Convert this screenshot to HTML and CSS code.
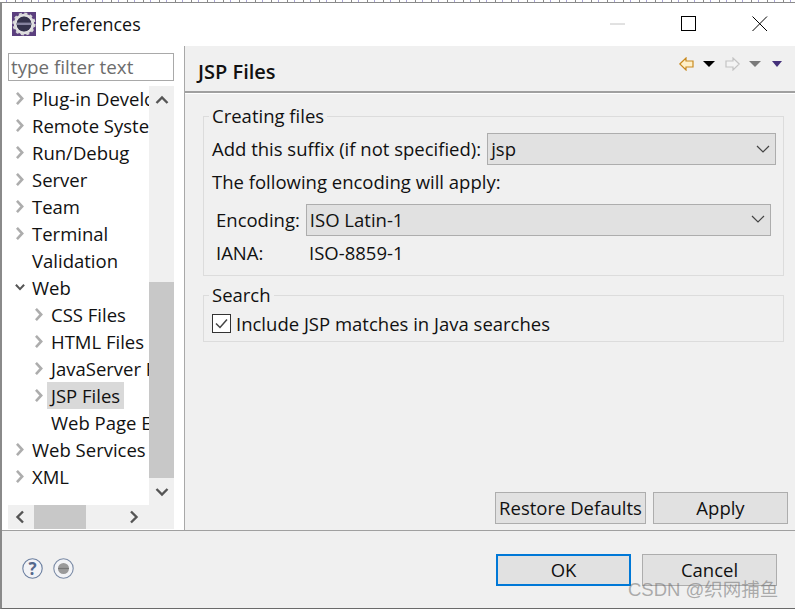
FILE: index.html
```html
<!DOCTYPE html>
<html lang="en">
<head>
<meta charset="utf-8">
<title>Preferences</title>
<link rel="stylesheet" href="styles.css">
</head>
<body>
<div class="noise"></div>
<div class="dialog">
  <header class="titlebar">
    <svg class="app-icon" width="24" height="24" viewBox="0 0 24 24">
      <rect width="24" height="24" fill="#5b3f7e"/>
      <circle cx="12" cy="12" r="8.800" fill="none" stroke="#e0e0e0" stroke-width="3"/>
      <circle cx="12" cy="12" r="10.600" fill="none" stroke="#d8d8d8" stroke-width="2" stroke-dasharray="3 2.550"/>
      <circle cx="12" cy="12" r="7.400" fill="#34324c"/>
      <rect x="5" y="10.600" width="14" height="2.400" fill="#85829f"/>
    </svg>
    <span class="title">Preferences</span>
    <div class="win-controls">
      <svg class="win-btn" width="16" height="16" viewBox="0 0 16 16"><path d="M0 8h15" stroke="#c4c4c4" stroke-width="1"/></svg>
      <svg class="win-btn" width="16" height="16" viewBox="0 0 16 16"><rect x=".5" y=".5" width="14" height="14" fill="none" stroke="#000"/></svg>
      <svg class="win-btn" width="16" height="16" viewBox="0 0 16 16"><path d="M.5.5l14.500 14.500M15 .5L.5 15" stroke="#000" stroke-width="1" fill="none"/></svg>
    </div>
  </header>

  <div class="main">
    <aside class="sidebar">
      <div class="filter">type filter text</div>
      <div class="tree-wrap">
        <div class="tree">
          <div class="row"><svg class="tw" viewBox="0 0 8 12"><use href="#closed"/></svg><span>Plug-in Development</span></div>
          <div class="row"><svg class="tw" viewBox="0 0 8 12"><use href="#closed"/></svg><span>Remote Systems</span></div>
          <div class="row"><svg class="tw" viewBox="0 0 8 12"><use href="#closed"/></svg><span>Run/Debug</span></div>
          <div class="row"><svg class="tw" viewBox="0 0 8 12"><use href="#closed"/></svg><span>Server</span></div>
          <div class="row"><svg class="tw" viewBox="0 0 8 12"><use href="#closed"/></svg><span>Team</span></div>
          <div class="row"><svg class="tw" viewBox="0 0 8 12"><use href="#closed"/></svg><span>Terminal</span></div>
          <div class="row"><span class="tw"></span><span>Validation</span></div>
          <div class="row"><svg class="tw" viewBox="0 0 8 12"><path d="M.2 3.500L4 7.500l3.800-4" fill="none" stroke="#555" stroke-width="1.900"/></svg><span>Web</span></div>
          <div class="row child"><svg class="tw" viewBox="0 0 8 12"><use href="#closed"/></svg><span>CSS Files</span></div>
          <div class="row child"><svg class="tw" viewBox="0 0 8 12"><use href="#closed"/></svg><span>HTML Files</span></div>
          <div class="row child"><svg class="tw" viewBox="0 0 8 12"><use href="#closed"/></svg><span>JavaServer Faces</span></div>
          <div class="row child"><svg class="tw" viewBox="0 0 8 12"><use href="#closed"/></svg><span class="selected">JSP Files</span></div>
          <div class="row child"><span class="tw"></span><span>Web Page Editor</span></div>
          <div class="row"><svg class="tw" viewBox="0 0 8 12"><use href="#closed"/></svg><span>Web Services</span></div>
          <div class="row"><svg class="tw" viewBox="0 0 8 12"><use href="#closed"/></svg><span>XML</span></div>
        </div>
        <div class="vscroll">
          <svg class="sb-arrow-v" width="14" height="10" viewBox="0 0 14 10"><path d="M1.500 8L7 2.500 12.500 8" fill="none" stroke="#555" stroke-width="2.400"/></svg>
          <div class="vtrack"><div class="vthumb"></div></div>
          <svg class="sb-arrow-v" width="14" height="10" viewBox="0 0 14 10"><path d="M1.500 2L7 7.500 12.500 2" fill="none" stroke="#555" stroke-width="2.400"/></svg>
        </div>
      </div>
      <div class="hscroll">
        <svg class="sb-arrow-h" width="10" height="14" viewBox="0 0 10 14"><path d="M8 1.500L2.500 7 8 12.500" fill="none" stroke="#555" stroke-width="2.400"/></svg>
        <div class="hthumb"></div>
        <svg class="sb-arrow-h" width="10" height="14" viewBox="0 0 10 14"><path d="M2 1.500L7.500 7 2 12.500" fill="none" stroke="#555" stroke-width="2.400"/></svg>
      </div>
    </aside>

    <section class="content">
      <div class="content-head">
        <h1>JSP Files</h1>
        <div class="nav-icons">
          <svg width="15" height="14" viewBox="0 0 15 14"><path d="M.8 7L7 1v3h7v6H7v3z" fill="#fff0c8" stroke="#c98a1e" stroke-width="1.200"/></svg>
          <svg class="caret" width="12" height="6" viewBox="0 0 12 6"><path d="M0 0h12L6 6z" fill="#000"/></svg>
          <svg class="next" width="15" height="14" viewBox="0 0 15 14"><path d="M14.200 7L8 1v3H1v6h7v3z" fill="#f4f4f4" stroke="#c4c4c4" stroke-width="1.200"/></svg>
          <svg class="caret" width="12" height="6" viewBox="0 0 12 6"><path d="M0 0h12L6 6z" fill="#7a7a7a"/></svg>
          <svg class="last" width="10" height="6" viewBox="0 0 10 6"><path d="M0 0h10L5 6z" fill="#44307a"/></svg>
        </div>
      </div>
      <div class="content-body">
        <fieldset class="group creating">
          <legend>Creating files</legend>
          <div class="line suffix">
            <span>Add this suffix (if not specified):</span>
            <div class="combo combo-suffix"><span>jsp</span><svg width="14" height="8" viewBox="0 0 14 8"><path d="M1 1l6 6 6-6" fill="none" stroke="#444" stroke-width="1.200"/></svg></div>
          </div>
          <div class="line encoding-note">The following encoding will apply:</div>
          <div class="line encoding">
            <span class="enc-label">Encoding:</span>
            <div class="combo combo-enc"><span>ISO Latin-1</span><svg width="14" height="8" viewBox="0 0 14 8"><path d="M1 1l6 6 6-6" fill="none" stroke="#444" stroke-width="1.200"/></svg></div>
          </div>
          <div class="line iana">
            <span class="iana-label">IANA:</span><span>ISO-8859-1</span>
          </div>
        </fieldset>
        <fieldset class="group search">
          <legend>Search</legend>
          <div class="line check">
            <svg class="checkbox" width="19" height="19" viewBox="0 0 19 19"><rect x=".5" y=".5" width="18" height="18" fill="#fff" stroke="#333"/><path d="M4 9.500l4 4 7-8" fill="none" stroke="#444" stroke-width="1.500"/></svg>
            <span>Include JSP matches in Java searches</span>
          </div>
        </fieldset>
        <div class="page-buttons">
          <div class="btn btn-restore">Restore Defaults</div>
          <div class="btn btn-apply">Apply</div>
        </div>
      </div>
    </section>
  </div>

  <footer class="footer">
    <div class="help-icons">
      <svg width="21" height="21" viewBox="0 0 21 21"><circle cx="10.500" cy="10.500" r="9.700" fill="#f2f3f6" stroke="#6b7fa0" stroke-width="1.100"/><text x="10.500" y="16.500" class="qmark">?</text></svg>
      <svg width="21" height="21" viewBox="0 0 21 21"><circle cx="10.500" cy="10.500" r="9.700" fill="#f2f3f6" stroke="#7b8ba6" stroke-width="1.100"/><circle cx="10.500" cy="10.500" r="5.500" fill="#9a9a9a"/><path d="M5 10.500h11" stroke="#777" stroke-width="1.200"/></svg>
    </div>
    <div class="dialog-buttons">
      <div class="btn btn-ok">OK</div>
      <div class="btn btn-cancel">Cancel</div>
    </div>
  </footer>
</div>
<div class="watermark">CSDN @织网捕鱼</div>
<svg class="defs" width="0" height="0"><defs><path id="closed" d="M1.200 .8L6 6l-4.800 5.200" fill="none" stroke="#adadad" stroke-width="2.400"/></defs></svg>
</body>
</html>
```
FILE: styles.css
```css
* { box-sizing: border-box; }
html, body { margin: 0; padding: 0; }
body {
  width: 795px;
  height: 609px;
  overflow: hidden;
  background: #fff;
  font-family: "Open Sans", "Noto Sans", sans-serif;
  font-size: 18.5px;
  color: #111;
  position: relative;
}
.noise {
  height: 2px;
  background: repeating-linear-gradient(90deg, #fff 0 6px, #a9a4d6 6px 7px, #fff 7px 15px, #888 15px 16px);
}
.dialog {
  height: 607px;
  display: flex;
  flex-direction: column;
  border-left: 2px solid #8a8a8a;
  border-top: 1px solid #8a8a8a;
  border-bottom: 1px solid #6a6a6a;
}
.titlebar {
  height: 43px;
  flex: none;
  background: #fff;
  display: flex;
  align-items: center;
  padding: 0 0 2px 10px;
}
.app-icon { flex: none; }
.title { margin-left: 5px; font-size: 17.9px; }
.win-controls {
  margin-left: auto;
  display: flex;
  gap: 55px;
  padding-right: 27px;
}
.win-btn { display: block; }

.main { flex: 1; display: flex; min-height: 0; }
.sidebar {
  width: 183px;
  flex: none;
  background: #fff;
  border-right: 1px solid #a8a8a8;
  padding: 7px 10px 0 6px;
  display: flex;
  flex-direction: column;
}
.filter {
  height: 28px;
  border: 1px solid #a9a9a9;
  color: #6d6d6d;
  line-height: 27px;
  padding-left: 2px;
  flex: none;
  font-size: 18.8px;
}
.tree-wrap {
  margin-top: 5px;
  height: 419px;
  display: flex;
  flex: none;
}
.tree { width: 141px; overflow: hidden; flex: none; padding-bottom: 1px; margin-top: -1px; }
.row {
  height: 27px;
  display: flex;
  align-items: center;
  white-space: nowrap;
  padding-left: 7px;
}
.row.child { padding-left: 26px; }
.tw { width: 10px; height: 13px; flex: none; margin-right: 7px; }
.row .selected { background: #d9d9d9; margin-left: -4px; padding: 0 4px; line-height: 27px; }
.vscroll {
  width: 25px;
  background: #f0f0f0;
  display: flex;
  flex-direction: column;
  align-items: center;
}
.sb-arrow-v { flex: none; margin: 9px 0; }
.vtrack { flex: 1; width: 100%; padding-top: 168px; }
.vthumb { height: 196px; background: #c8c8c8; }
.hscroll {
  height: 24px;
  flex: none;
  background: #f0f0f0;
  display: flex;
  align-items: center;
}
.sb-arrow-h { flex: none; margin-left: 7px; }
.hthumb { width: 52px; height: 24px; background: #c8c8c8; margin-left: 9px; }
.hscroll .sb-arrow-h:last-child { margin-left: 43px; }

.content {
  flex: 1;
  min-width: 0;
  background: #f0f0f0;
  display: flex;
  flex-direction: column;
}
.content-head {
  height: 47px;
  flex: none;
  display: flex;
  justify-content: space-between;
  border-bottom: 2px solid #a0a0a0;
  box-shadow: 0 1px 0 #fff;
  padding-left: 13px;
}
h1 {
  margin: 0;
  font-size: 20px;
  font-weight: 600;
  line-height: 25px;
  padding-top: 13px;
}
.nav-icons {
  display: flex;
  align-items: center;
  height: 36px;
  padding-right: 13px;
  gap: 9px;
}
.nav-icons svg { display: block; }
.nav-icons .next { margin-left: 1px; }
.nav-icons .last { margin-left: 2px; }

.content-body {
  flex: 1;
  padding: 10px 7px 6px 18px;
  display: flex;
  flex-direction: column;
  min-height: 0;
}
.group {
  margin: 0;
  padding: 0 0 0 8px;
  border: 1px solid #dcdcdc;
  min-width: 0;
  width: 581px;
}
.group legend { padding: 0 3px; margin-left: -3px; line-height: 26px; }
.creating { height: 173px; flex: none; }
.search { height: 60px; flex: none; margin-top: 6px; }
.line { display: flex; align-items: center; white-space: nowrap; }
.suffix { height: 33px; margin-top: 3px; }
.encoding-note { height: 32px; }
.encoding { height: 32px; margin-top: 7px; padding-left: 4px; }
.iana { height: 32px; padding-left: 4px; }
.iana-label { width: 93px; }
.enc-label { margin: 0 6px 2px 0; }
.combo {
  height: 32px;
  background: #e1e1e1;
  border: 1px solid #adadad;
  display: flex;
  align-items: center;
  justify-content: space-between;
  padding: 0 5px 0 3px;
}
.combo-suffix { width: 289px; margin-left: 6px; }
.combo-enc { width: 465px; padding-bottom: 2px; }
.check { height: 32px; margin-top: -1px; }
.checkbox { margin-right: 5px; flex: none; }
.page-buttons {
  margin-top: auto;
  display: flex;
  gap: 7px;
  padding-left: 292px;
}
.btn {
  height: 32px;
  background: #e1e1e1;
  border: 1px solid #adadad;
  text-align: center;
  line-height: 29px;
}
.btn-restore { width: 151px; flex: none; }
.btn-apply { width: 135px; flex: none; }

.footer {
  height: 78px;
  flex: none;
  background: #f0f0f0;
  border-top: 1px solid #a0a0a0;
  display: flex;
  justify-content: space-between;
  align-items: center;
  padding: 0 18px 0 20px;
}
.help-icons { display: flex; gap: 10px; margin-top: -2px; }
.help-icons svg { display: block; }
.qmark {
  font-family: "Open Sans", sans-serif;
  font-size: 17px;
  font-weight: 700;
  fill: #55688c;
  text-anchor: middle;
}
.dialog-buttons { display: flex; gap: 11px; }
.btn-ok { width: 135px; border: 2px solid #0078d7; line-height: 27px; }
.btn-cancel { width: 135px; }

.watermark {
  position: absolute;
  left: 628px;
  top: 578px;
  font-family: "Liberation Sans", "Noto Sans CJK SC", sans-serif;
  font-size: 18.5px;
  line-height: 24px;
  color: rgba(110, 110, 110, 0.55);
  white-space: nowrap;
}
.defs { position: absolute; }
```
